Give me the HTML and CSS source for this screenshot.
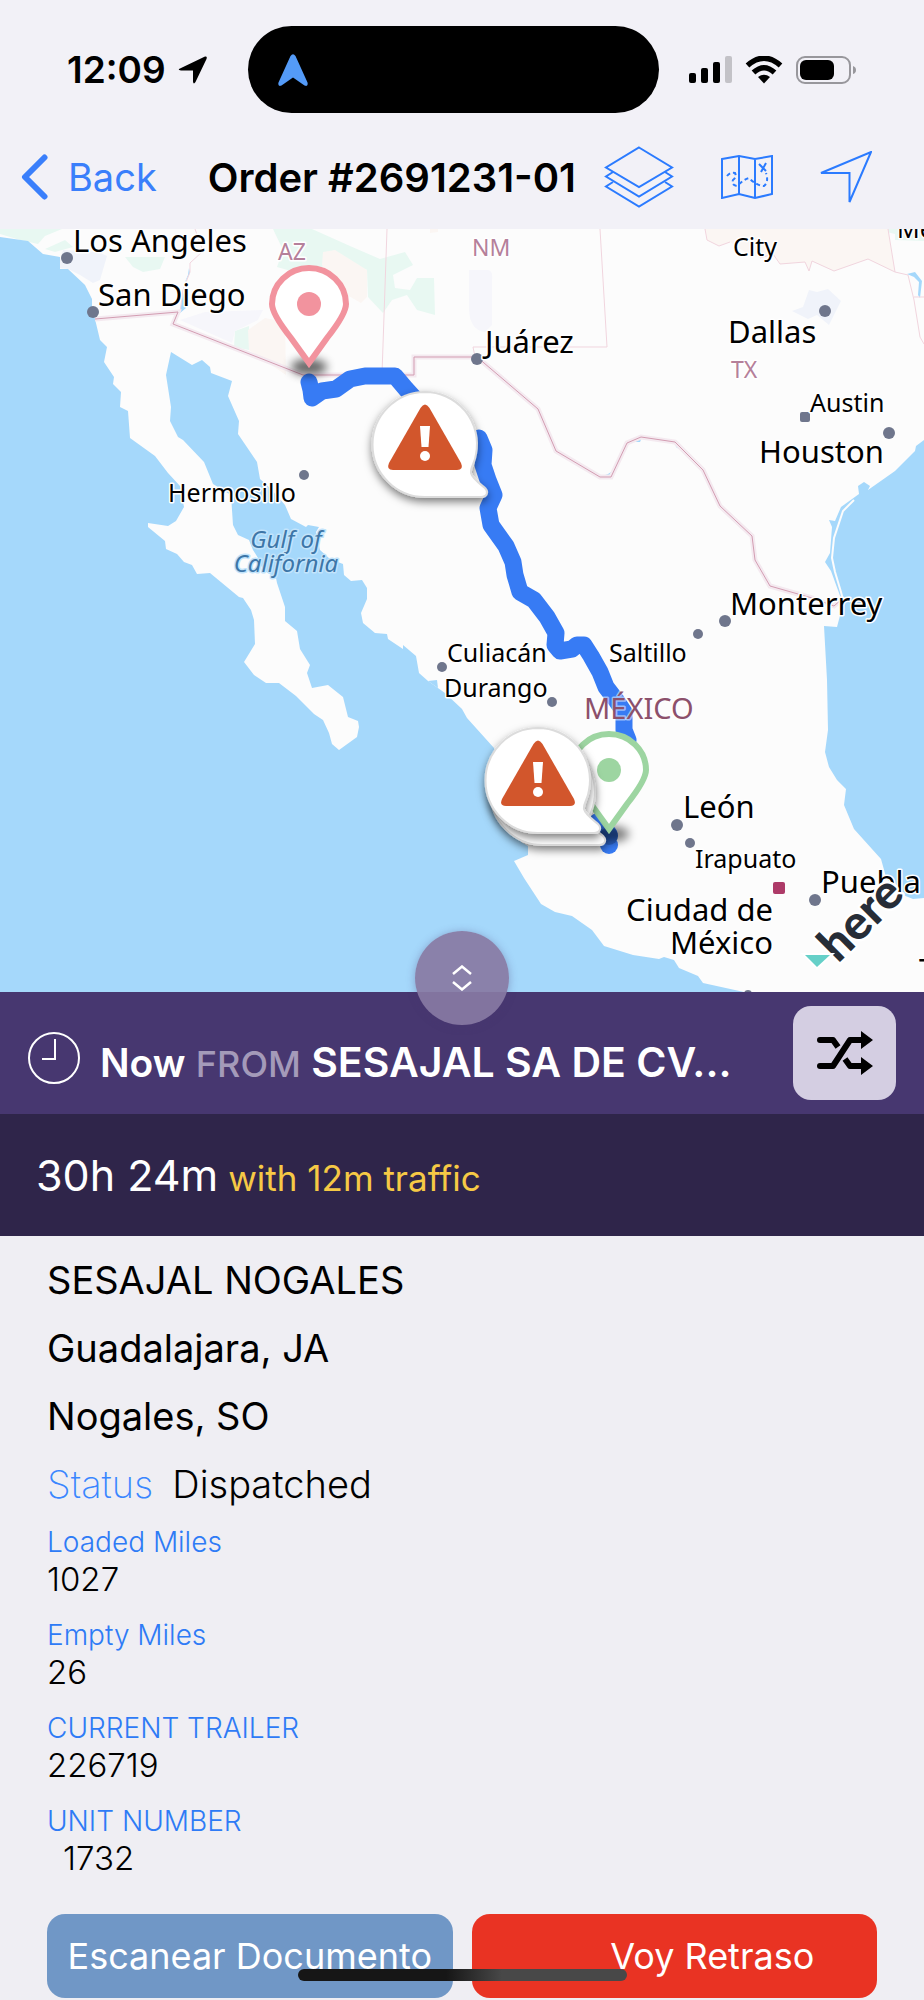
FILE: index.html
```html
<!DOCTYPE html>
<html lang="es">
<head>
  <meta charset="UTF-8" />
  <meta name="viewport" content="width=device-width, initial-scale=1.0"/>
  <title>Order #2691231-01</title>
  <link rel="stylesheet" href="styles.css">
</head>
<body>
  <header class="top">
    <div class="status-bar">
      <div class="status-left">
        <span class="time">12:09</span>
        <svg class="icon-location" width="30" height="30" viewBox="0 0 30 30"><path d="M2 13.500 L27 1.500 Q29.500 1 28.500 4 L17.500 27 Q15.500 30 15 26.500 V15.500 H3 Q-1 15 2 13.500Z"/></svg>
      </div>
      <div class="island">
        <svg width="30" height="32" viewBox="0 0 30 32"><path d="M12.500 2 Q15 -1.500 17.500 2 L29.500 28.500 Q30.500 33 26.500 31.500 L15 23.500 L3.500 31.500 Q-.5 33 .5 28.500Z" fill="#549bf8"/></svg>
      </div>
      <div class="status-right">
        <svg width="43" height="28" viewBox="0 0 43 28">
          <rect x="0" y="17" width="7" height="10" rx="2"/>
          <rect x="12" y="12" width="7" height="15" rx="2"/>
          <rect x="24" y="6" width="7" height="21" rx="2"/>
          <rect x="36" y="0" width="7" height="27" rx="2" fill="#c3c2c7"/>
        </svg>
        <svg width="38" height="28" viewBox="0 0 38 28">
          <path d="M2.500 9.500 Q19 -5 35.500 9.500" fill="none" stroke="#000" stroke-width="5.500"/>
          <path d="M8.500 16.500 Q19 7 29.500 16.500" fill="none" stroke="#000" stroke-width="5.500"/>
          <path d="M13 21 Q19 16.500 25 21 L19 27.500Z"/>
        </svg>
        <svg width="60" height="28" viewBox="0 0 60 28">
          <rect x="1" y="1" width="53" height="26" rx="8" fill="none" stroke="#98979c" stroke-width="2"/>
          <rect x="4" y="4" width="34" height="20" rx="6"/>
          <path d="M57 10 Q60 11 60 14 Q60 17 57 18Z" fill="#98979c"/>
        </svg>
      </div>
    </div>
    <nav class="nav-bar">
      <a class="back" href="#">
        <svg width="27" height="46" viewBox="0 0 27 46"><path d="M23.500 3.500 L4 23 L23.500 42.500" fill="none" stroke="#3a7ffb" stroke-width="6" stroke-linecap="round" stroke-linejoin="round"/></svg>
        Back
      </a>
      <h1 class="title">Order #2691231-01</h1>
      <div class="nav-icons">
        <button type="button" aria-label="Layers">
          <svg width="70" height="62" viewBox="0 0 70 62">
            <path d="M35 1.500 L68 21.500 L35 41 L2 21.500Z"/>
            <path d="M9 26 L2 30.500 L35 50.500 L68 30.500 L61 26"/>
            <path d="M9 36 L2 40.500 L35 60.500 L68 40.500 L61 36"/>
          </svg>
        </button>
        <button type="button" aria-label="Map">
          <svg width="52" height="44" viewBox="0 0 52 44">
            <path d="M1 4 L18 1 L34 4 L51 1 V39 L34 43 L18 39 L1 43Z M18 1 V39 M34 4 V43"/>
            <path stroke-dasharray="4 3" d="M6 21 Q9 17 14 18 Q16 22 12 25 Q10 30 16 31 Q23 24 28 23 Q36 31 43 31 Q48 27 45 18"/>
            <path d="M38 9 L45 16 M45 8 L40 17"/>
          </svg>
        </button>
        <button type="button" aria-label="Locate">
          <svg width="52" height="52" viewBox="0 0 52 52"><path d="M1 22 L51 1 L29.500 51 V22Z"/></svg>
        </button>
      </div>
    </nav>
  </header>

  <main>
    <div class="map">
      <svg class="map-canvas" viewBox="0 229 924 763" role="img" aria-label="Route map">
        <defs>
          <filter id="blur" x="-50%" y="-100%" width="200%" height="300%"><feGaussianBlur stdDeviation="5"/></filter>
          <filter id="drop" x="-20%" y="-20%" width="140%" height="150%"><feDropShadow dx="0" dy="4" stdDeviation="4" flood-opacity="0.5"/></filter>
          <g id="bubble">
            <path d="M0 -52 A52 52 0 0 1 51 10 C50 19 45 24 46 29 C47 34 54 39 60 44 C64 48 62 53 56 53 H0 A52 52 0 0 1 0 -52Z" fill="#fff" stroke="#dcdcdc" stroke-width="2" filter="url(#drop)"/>
          </g>
          <g id="warning">
            <path d="M-4.500 -36 Q0 -43 4.500 -36 L36 19 Q39 26 32 26 H-32 Q-39 26 -36 19Z" fill="#d2562c"/>
            <path d="M-5 -18 H5 L3.500 3 H-3.500Z" fill="#fff"/>
            <circle cy="12" r="5" fill="#fff"/>
          </g>
        </defs>

        <rect class="land" y="229" width="924" height="763"/>

        <!-- parks, deserts and urban areas -->
        <path class="green" d="M273 229 H312 L350 246 L380 259 L405 252 L413 265 L393 275 L395 288 L410 290 L417 278 L434 278 L435 315 L417 310 L407 295 L392 300 L383 313 L368 297 L367 270 L323 252 L325 264 L312 277 L277 267 L283 250Z"/>
        <path class="green" d="M0 229 H62 L45 236 L38 244 L20 240 L0 234Z M125 257 H165 L160 269 L143 272 L133 267Z M235 331 L249 326 V350 L234 347Z M45 249 L65 240 L73 247 L55 252Z M875 229 H924 V241 L895 240 V234Z"/>
        <path class="sand" d="M323 252 L335 250 L367 270 V297 L361 303 L347 295 L322 265Z M286 375 L249 350 L248 330 L265 318 L285 322Z M430 229 H438 V232 L430 233Z"/>
        <path class="sand" d="M705 229 L707 240 L719 246 L730 242 L745 252 L760 258 L773 254 L780 264 L805 262 L809 271 L812 261 L834 271 L868 259 L895 272 L888 229Z"/>
        <path class="urban" d="M58 268 L63 250 L98 252 L107 256 L100 280 L93 283 L80 275 L68 269Z M792 311 L803 307 L809 290 L817 292 L828 289 L841 301 L829 325 L817 315 L808 319Z"/>
        <path class="reserve" d="M180 320 L205 312 L263 310 L258 320 L235 331 L232 343Z M469 270 H488 Q493 270 492 280 V325 L485 332 Q470 330 469 310Z"/>

        <!-- ocean -->
        <path class="water" d="M0 237 L28 241 L43 254 L60 257 L60 269 L68 269 L85 285 L92 299 V308 L95 319 L100 340 L107 347 L104 362 L114 377 L113 384 L121 392 L120 407 L128 411 L130 438 L155 456 L168 473 L180 486 L184 507 L176 521 L168 526 L148 523 V527 L165 541 L166 549 L177 554 L184 562 L192 565 L197 574 L210 573 L239 597 L243 598 L251 610 L254 620 L255 644 L244 662 L254 675 L266 683 H279 L296 696 L314 714 L323 720 L329 733 L332 744 L339 750 L357 737 L359 727 L358 721 L348 717 L343 697 L328 685 L312 688 L307 673 L310 665 L300 649 L297 631 L285 621 V607 L277 583 L276 578 L263 570 L258 558 L253 550 L249 540 L238 535 L233 525 L231 495 L213 484 L204 462 L183 440 L178 437 L170 421 L171 407 L166 375 L171 352 L192 365 L202 360 L210 367 L211 373 L232 381 L228 396 L239 421 L238 434 L257 462 L260 479 L270 488 L285 505 L291 519 L306 527 L308 525 L319 527 L316 532 L320 550 L330 559 L343 564 L344 575 L351 581 L362 580 L367 588 V599 L361 613 L363 623 L375 633 L387 634 L388 639 L403 649 V645 L416 656 L419 673 L428 681 L445 693 L462 709 L467 718 L494 748 L505 780 L520 810 L521 842 L528 846 V855 L514 861 L524 878 L541 904 L555 912 L572 916 L592 930 L604 946 L633 955 L659 959 L664 957 L674 960 L679 968 L698 976 L703 983 L744 992 H0Z"/>
        <path class="water" d="M924 440 L916 446 L915 451 L895 471 L868 490 L870 486 L864 482 L858 486 L859 494 L841 507 L835 521 L829 520 L832 527 L830 553 L825 562 L831 571 L839 593 L843 604 L837 627 L824 626 L827 680 L828 730 L825 752 L829 767 L837 780 L846 789 L844 805 L854 829 L881 859 L886 877 L895 890 L903 895 L913 899 L924 898Z"/>
        <path class="water" d="M428 681 L437 680 L438 688Z M600 477 L605 479 L611 476 L617 468 L608 474Z M907 274 L915 272 L922 281 L920 298 L918 295 L919 282 L914 277Z M634 442 L642 437 L640 442Z M675 442 L679 449 L676 447Z"/>
        <path class="water" d="M189 268 L190 273 L184 284 L188 275Z M183 292 L186 308 L180 313Z"/>
        <path class="sandbar" d="M854 500 L843 511 L834 538 L832 558 L835 572 L841 592 L843 600"/>

        <!-- borders -->
        <path class="state" d="M195 229 L203 251 L190 263 V272 L183 290 L180 312 M387 229 L382 374 M600 229 L607 347 H473 L475 357 M705 229 L707 240 L719 246 L730 242 M760 258 L773 254 L780 264 L805 262 L809 271 L812 261 L834 271 L868 259 L895 272 L908 275 L914 300 L920 337 L924 344 M888 229 L895 272 M914 297 H924"/>
        <path class="border-glow" d="M95 319 L178 312 L173 324 L303 375 H414 V357 H477 L538 409 L556 451 L600 477 H611 L627 443 L641 437 L675 442 L703 470 L720 506 L752 536 L755 560 L770 586 L812 598 L834 606 L843 598"/>
        <path class="border" d="M95 319 L178 312 L173 324 L303 375 H414 V357 H477 L538 409 L556 451 L600 477 H611 L627 443 L641 437 L675 442 L703 470 L720 506 L752 536 L755 560 L770 586 L812 598 L834 606 L843 598"/>

        <!-- route -->
        <path class="route" d="M309 382 L311 390 L312 398 L322 391 L336 389 L350 379 L365 376 H395 L406 389 L416 400 M479 438 L484 450 L483 465 L488 480 L494 495 L488 508 L491 525 L506 546 L513 562 L515 575 L520 592 L534 600 L547 617 L556 633 L555 645 L560 651 L572 649 L577 645 H584 L591 656 L600 672 L606 687 L616 700 L624 712 V730 L628 740 M597 822 L609 834"/>
        <circle cx="609" cy="845" r="9" fill="#377bf4"/>
        <circle cx="609" cy="836" r="9" fill="#2b64c8"/>

        <g class="dot">
          <circle cx="67" cy="258" r="6"/><circle cx="93" cy="312" r="6"/>
          <circle cx="304" cy="475" r="5"/><circle cx="477" cy="359" r="6"/>
          <circle cx="825" cy="311" r="6"/><rect x="800" y="412" width="10" height="10" rx="2"/>
          <circle cx="889" cy="433" r="6"/><circle cx="442" cy="667" r="5"/>
          <circle cx="552" cy="702" r="5"/><circle cx="698" cy="634" r="5"/>
          <circle cx="725" cy="621" r="6"/><circle cx="677" cy="825" r="6"/>
          <circle cx="690" cy="843" r="5"/><circle cx="815" cy="900" r="6"/>
          <rect class="capital" x="773" y="882" width="12" height="12" rx="2"/>
          <circle cx="748" cy="994" r="4"/>
        </g>

        <g class="city-big">
          <text x="73" y="252">Los Angeles</text>
          <text x="98" y="306">San Diego</text>
          <text x="485" y="353">Juárez</text>
          <text x="728" y="343">Dallas</text>
          <text x="759" y="463">Houston</text>
          <text x="730" y="615">Monterrey</text>
          <text x="683" y="818">León</text>
          <text x="773" y="921" text-anchor="end">Ciudad de</text>
          <text x="773" y="954" text-anchor="end">México</text>
          <text x="821" y="893">Puebla</text>
          <text x="919" y="981">T</text>
        </g>
        <g class="city">
          <text x="168" y="502">Hermosillo</text>
          <text x="733" y="256">City</text>
          <text x="897" y="238">Memphis</text>
          <text x="810" y="412">Austin</text>
          <text x="447" y="662">Culiacán</text>
          <text x="444" y="697">Durango</text>
          <text x="609" y="662">Saltillo</text>
          <text x="695" y="868">Irapuato</text>
        </g>
        <g class="region">
          <text x="278" y="260">AZ</text>
          <text x="472" y="256">NM</text>
          <text x="731" y="378">TX</text>
        </g>
        <text class="country" x="584" y="719">MÉXICO</text>
        <g class="sea">
          <text x="286" y="548" text-anchor="middle">Gulf of</text>
          <text x="286" y="572" text-anchor="middle">California</text>
        </g>

        <!-- stops -->
        <ellipse cx="309" cy="367" rx="18" ry="8" opacity="0.6" filter="url(#blur)"/>
        <path d="M309 363 L291 338 Q272 314 272 304 A37 36 0 0 1 346 304 Q346 314 327 338Z" fill="#fff" stroke="#f2939e" stroke-width="6"/>
        <circle cx="309" cy="304" r="12" fill="#f2939e"/>

        <ellipse cx="611" cy="834" rx="18" ry="8" opacity="0.5" filter="url(#blur)"/>
        <path d="M609 829 L591 804 Q572 780 572 770 A37 36 0 0 1 646 770 Q646 780 627 804Z" fill="#fff" stroke="#9dd5a1" stroke-width="6"/>
        <circle cx="609" cy="770" r="12" fill="#9dd5a1"/>

        <!-- road alerts -->
        <use href="#bubble" x="425" y="444"/>
        <use href="#warning" x="425" y="444"/>
        <use href="#bubble" x="543" y="792"/>
        <use href="#bubble" x="538" y="780"/>
        <use href="#warning" x="538" y="780"/>

        <text class="here" transform="translate(838 964) rotate(-45)">here</text>
        <path d="M805 955 H830 L817 967Z" fill="#66d0c8" stroke="#fff" stroke-width="4" paint-order="stroke"/>
      </svg>
      <button class="handle" type="button" aria-label="Resize map">
        <svg width="20" height="26" viewBox="0 0 20 26"><path d="M1 9 L10 1.500 L19 9 M1 17 L10 24.500 L19 17" fill="none" stroke="#fff" stroke-width="2.500"/></svg>
      </button>
    </div>

    <section class="trip">
      <svg class="clock" width="52" height="52" viewBox="0 0 52 52"><circle cx="26" cy="26" r="25"/><path d="M27 7 V27 H14"/></svg>
      <p class="trip-text"><span class="when">Now</span> <span class="from">FROM</span> <span>SESAJAL SA DE CV...</span></p>
      <button class="shuffle" type="button" aria-label="Swap route">
        <svg width="56" height="46" viewBox="0 0 56 46">
          <path d="M3 10 H16 L21 17 M3 36 H16 L33 10 H45 M28 29 L33 36 H45" fill="none" stroke="#000" stroke-width="6" stroke-linejoin="round"/>
          <circle cx="3" cy="10" r="3"/><circle cx="3" cy="36" r="3"/>
          <path d="M44 1 L56 10 L44 19Z M44 27 L56 36 L44 45Z"/>
        </svg>
      </button>
    </section>

    <section class="eta">
      <span class="duration">30h 24m</span>
      <span class="traffic">with 12m traffic</span>
    </section>

    <section class="details">
      <p class="line">SESAJAL NOGALES</p>
      <p class="line">Guadalajara, JA</p>
      <p class="line">Nogales, SO</p>
      <p class="line status"><span class="status-label">Status</span><span>Dispatched</span></p>
      <dl class="fields">
        <div><dt>Loaded Miles</dt><dd>1027</dd></div>
        <div><dt>Empty Miles</dt><dd>26</dd></div>
        <div><dt>CURRENT TRAILER</dt><dd>226719</dd></div>
        <div><dt>UNIT NUMBER</dt><dd class="indent">1732</dd></div>
      </dl>
      <div class="actions">
        <button class="btn btn-scan" type="button">Escanear Documento</button>
        <button class="btn btn-late" type="button">Voy Retraso</button>
        <div class="home-indicator"></div>
      </div>
    </section>
  </main>
</body>
</html>
```

FILE: styles.css
```css
* {
  box-sizing: border-box;
}
body {
  margin: 0;
  font-family: Inter, sans-serif;
  background: #efeef3;
  color: #000;
}
h1, p, dl, dd {
  margin: 0;
}
button {
  border: 0;
  padding: 0;
  background: none;
  font-family: inherit;
  cursor: pointer;
}
svg {
  display: block;
  flex: none;
}

/* header */
.top {
  background: #f2f1f7;
}
.status-bar {
  display: grid;
  grid-template-columns: 1fr 411px 1fr;
  align-items: center;
  padding: 26px 18px 12px 0;
}
.status-left {
  display: flex;
  align-items: center;
  gap: 12px;
  padding-left: 67px;
}
.time {
  font-size: 37px;
  font-weight: 600;
}
.island {
  display: flex;
  align-items: center;
  height: 87px;
  padding: 0 30px;
  border-radius: 44px;
  background: #000;
}
.status-right {
  display: flex;
  align-items: center;
  gap: 13px;
  padding-left: 30px;
}
.nav-bar {
  display: flex;
  align-items: center;
  height: 104px;
  padding: 0 52px 0 21px;
}
.back {
  display: flex;
  align-items: center;
  gap: 20px;
  color: #3a7ffb;
  font-size: 38px;
  text-decoration: none;
}
.title {
  margin-left: 51px;
  font-size: 40px;
  font-weight: 600;
  white-space: nowrap;
}
.nav-icons {
  display: flex;
  align-items: center;
  gap: 47px;
  margin-left: auto;
}
.nav-icons svg {
  fill: none;
  stroke: #2b7bff;
  stroke-width: 2;
}

/* map */
.map {
  position: relative;
}
.map-canvas {
  width: 100%;
  height: auto;
  font-family: "Noto Sans", sans-serif;
}
.land {
  fill: #fcfcfc;
}
.water {
  fill: #a5d8fb;
}
.green {
  fill: #e8f8f2;
}
.sand {
  fill: #fbf6f3;
}
.urban {
  fill: #f0f3fa;
}
.reserve {
  fill: #f6f6fb;
}
.sandbar {
  fill: none;
  stroke: #fcfcfc;
  stroke-width: 2;
}
.state {
  fill: none;
  stroke: #f1d5de;
  stroke-width: 1;
}
.border-glow {
  fill: none;
  stroke: #f4eaf0;
  stroke-width: 5;
}
.border {
  fill: none;
  stroke: #d39db2;
  stroke-width: 1;
}
.route {
  fill: none;
  stroke: #377bf4;
  stroke-width: 17;
  stroke-linecap: round;
  stroke-linejoin: round;
}
.dot {
  fill: #6f768c;
}
.capital {
  fill: #ad3a68;
}
.map-canvas text {
  paint-order: stroke;
  stroke: #fff;
  stroke-width: 3px;
  stroke-linejoin: round;
}
.city-big {
  font-size: 31px;
}
.city {
  font-size: 25px;
}
.region {
  font-size: 23px;
  fill: #b5809a;
}
.map-canvas .country {
  font-size: 29px;
  fill: #8c506b;
  stroke: rgba(255, 255, 255, 0.5);
}
.sea {
  font-size: 24px;
  font-style: italic;
  fill: #3d76a8;
}
.map-canvas .sea text {
  stroke: #c3e4fb;
}
.map-canvas .here {
  font-family: Lato, sans-serif;
  font-size: 48px;
  font-weight: 900;
  fill: #272d37;
  stroke-width: 5px;
}
.handle {
  position: absolute;
  left: 50%;
  bottom: -33px;
  display: flex;
  align-items: center;
  justify-content: center;
  width: 94px;
  height: 94px;
  margin-left: -47px;
  border-radius: 50%;
  background: rgba(136, 121, 163, 0.92);
  box-shadow: 0 1px 8px rgba(71, 55, 112, 0.35);
}

/* trip bars */
.trip {
  display: flex;
  align-items: center;
  min-height: 122px;
  padding: 0 28px;
  background: #473770;
  color: #fff;
}
.clock {
  margin-top: 10px;
  fill: none;
  stroke: #fff;
  stroke-width: 2;
}
.trip-text {
  flex: 1;
  margin-left: 20px;
  padding-top: 20px;
  font-size: 41px;
  font-weight: 600;
  line-height: 48px;
  white-space: nowrap;
}
.when {
  font-size: 39px;
}
.from {
  font-size: 36px;
  font-weight: 500;
  color: #a49ab9;
}
.shuffle {
  display: flex;
  align-items: center;
  justify-content: center;
  width: 103px;
  height: 94px;
  border-radius: 18px;
  background: #d4cee2;
}
.eta {
  display: flex;
  align-items: baseline;
  gap: 10px;
  min-height: 122px;
  padding: 34px 36px;
  background: #2f254a;
  color: #fff;
  line-height: 54px;
}
.duration {
  font-size: 43px;
}
.traffic {
  font-size: 35px;
  line-height: 44px;
  color: #f6c945;
}

/* order details */
.details {
  padding: 10px 47px 2px;
}
.line {
  font-size: 38px;
  line-height: 68px;
}
.status {
  display: flex;
  gap: 19px;
  font-weight: 300;
}
.status-label {
  color: #3a86ff;
  font-weight: 200;
}
.fields {
  display: grid;
  gap: 19px;
  margin-top: 6px;
}
.fields dt {
  color: #2e7bf6;
  font-size: 28px;
  font-weight: 300;
  line-height: 36px;
}
.fields dd {
  font-size: 33px;
  font-weight: 300;
  line-height: 38px;
}
.fields .indent {
  padding-left: 16px;
}
.actions {
  position: relative;
  display: grid;
  grid-template-columns: 1fr 1fr;
  gap: 19px;
  margin-top: 37px;
}
.btn {
  height: 84px;
  border-radius: 18px;
  color: #fff;
  font-size: 36px;
}
.btn-scan {
  background: #7097c6;
}
.btn-late {
  padding-left: 76px;
  background: #e93323;
}
.home-indicator {
  position: absolute;
  left: 50%;
  bottom: 17px;
  width: 329px;
  height: 12px;
  margin-left: -164px;
  border-radius: 6px;
  background: linear-gradient(90deg, #161616 45%, #484848 62%);
}
```
